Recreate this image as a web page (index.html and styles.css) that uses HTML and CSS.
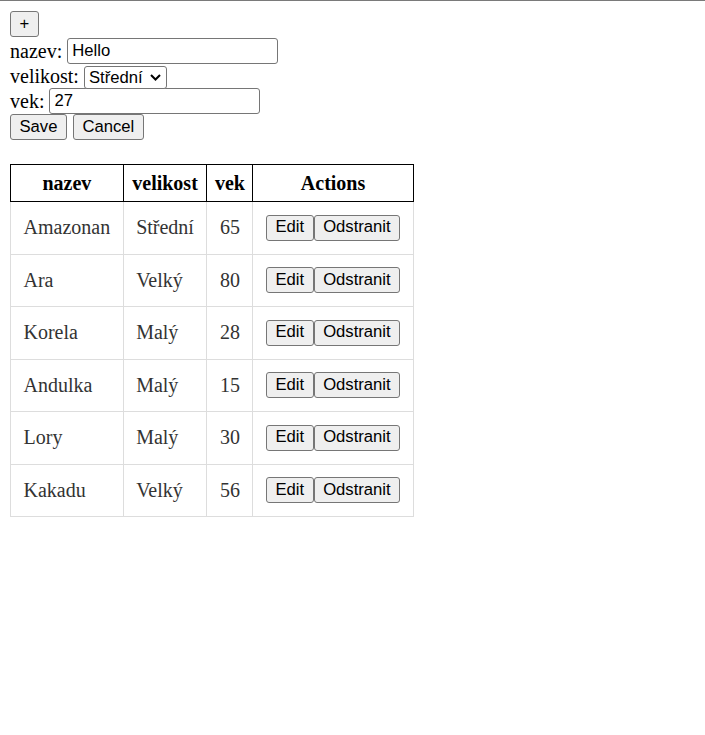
FILE: index.html
```html
<!DOCTYPE html>
<html>
<head>
<meta charset="utf-8">
<link rel="stylesheet" href="styles.css">
</head>
<body>
<div class="topline"></div>
<div class="page">
  <div class="form">
    <div class="row first-row"><button class="btn">+</button></div>
    <div class="row"><span>nazev:</span><input class="field" type="text" value="Hello"></div>
    <div class="row sel-row"><span>velikost:</span>
      <span class="select-wrap">
        <select class="select"><option>Střední</option><option>Velký</option><option>Malý</option></select>
        <svg class="chev" width="11" height="7" viewBox="0 0 11 7"><path d="M1 1 L5.5 5.5 L10 1" fill="none" stroke="#000" stroke-width="2"/></svg>
      </span>
    </div>
    <div class="row"><span>vek:</span><input class="field" type="text" value="27"></div>
    <div class="row actions-row"><button class="btn">Save</button><button class="btn">Cancel</button></div>
  </div>

  <table class="grid">
    <thead>
      <tr><th>nazev</th><th>velikost</th><th>vek</th><th>Actions</th></tr>
    </thead>
    <tbody>
      <tr><td>Amazonan</td><td>Střední</td><td>65</td><td><div class="acts"><button class="btn">Edit</button><button class="btn">Odstranit</button></div></td></tr>
      <tr><td>Ara</td><td>Velký</td><td>80</td><td><div class="acts"><button class="btn">Edit</button><button class="btn">Odstranit</button></div></td></tr>
      <tr><td>Korela</td><td>Malý</td><td>28</td><td><div class="acts"><button class="btn">Edit</button><button class="btn">Odstranit</button></div></td></tr>
      <tr><td>Andulka</td><td>Malý</td><td>15</td><td><div class="acts"><button class="btn">Edit</button><button class="btn">Odstranit</button></div></td></tr>
      <tr><td>Lory</td><td>Malý</td><td>30</td><td><div class="acts"><button class="btn">Edit</button><button class="btn">Odstranit</button></div></td></tr>
      <tr><td>Kakadu</td><td>Velký</td><td>56</td><td><div class="acts"><button class="btn">Edit</button><button class="btn">Odstranit</button></div></td></tr>
    </tbody>
  </table>
</div>
</body>
</html>
```
FILE: styles.css
```css
html, body {
  margin: 0;
  padding: 0;
  background: #fff;
}
body {
  font-family: "Liberation Serif", "Times New Roman", serif;
  font-size: 20px;
  color: #000;
}
.topline {
  border-top: 1px solid #7a7a7a;
}
.page {
  padding: 10px 10px;
}
.form {
  display: flex;
  flex-direction: column;
  align-items: flex-start;
}
.row {
  display: flex;
  align-items: center;
  gap: 5px;
  height: 26px;
}
.first-row {
  height: 27px;
  align-items: flex-start;
}
.sel-row {
  height: 24px;
}
.actions-row {
  gap: 6px;
  align-items: flex-start;
}
.btn {
  box-sizing: border-box;
  height: 26px;
  margin: 0;
  padding: 0 8.5px;
  font-family: "Liberation Sans", Arial, sans-serif;
  font-size: 16.67px;
  color: #000;
  background: #efefef;
  border: 1px solid #767676;
  border-radius: 3px;
  line-height: 1;
}
.field {
  box-sizing: border-box;
  width: 211px;
  height: 26px;
  margin: 0;
  padding: 1px 4px;
  font-family: "Liberation Sans", Arial, sans-serif;
  font-size: 16.67px;
  color: #000;
  background: #fff;
  border: 1px solid #767676;
  border-radius: 3px;
}
.select-wrap {
  position: relative;
  display: inline-block;
  height: 23px;
}
.select {
  -webkit-appearance: none;
  appearance: none;
  box-sizing: border-box;
  width: 83px;
  height: 23px;
  margin: 0;
  padding: 0 0 0 4px;
  font-family: "Liberation Sans", Arial, sans-serif;
  font-size: 16.67px;
  color: #000;
  background: #fff;
  border: 1px solid #767676;
  border-radius: 3px;
}
.chev {
  position: absolute;
  right: 6px;
  top: 9px;
  pointer-events: none;
}
.grid {
  margin-top: 24px;
  border-collapse: collapse;
}
.grid th {
  border: 1px solid #000;
  padding: 6.5px 6px;
  font-weight: bold;
  text-align: center;
  line-height: 23px;
}
.grid td {
  border: 1px solid #ddd;
  padding: 12.75px 12.5px;
  color: #333;
  line-height: 23px;
  vertical-align: middle;
}
.acts {
  display: flex;
}
```
